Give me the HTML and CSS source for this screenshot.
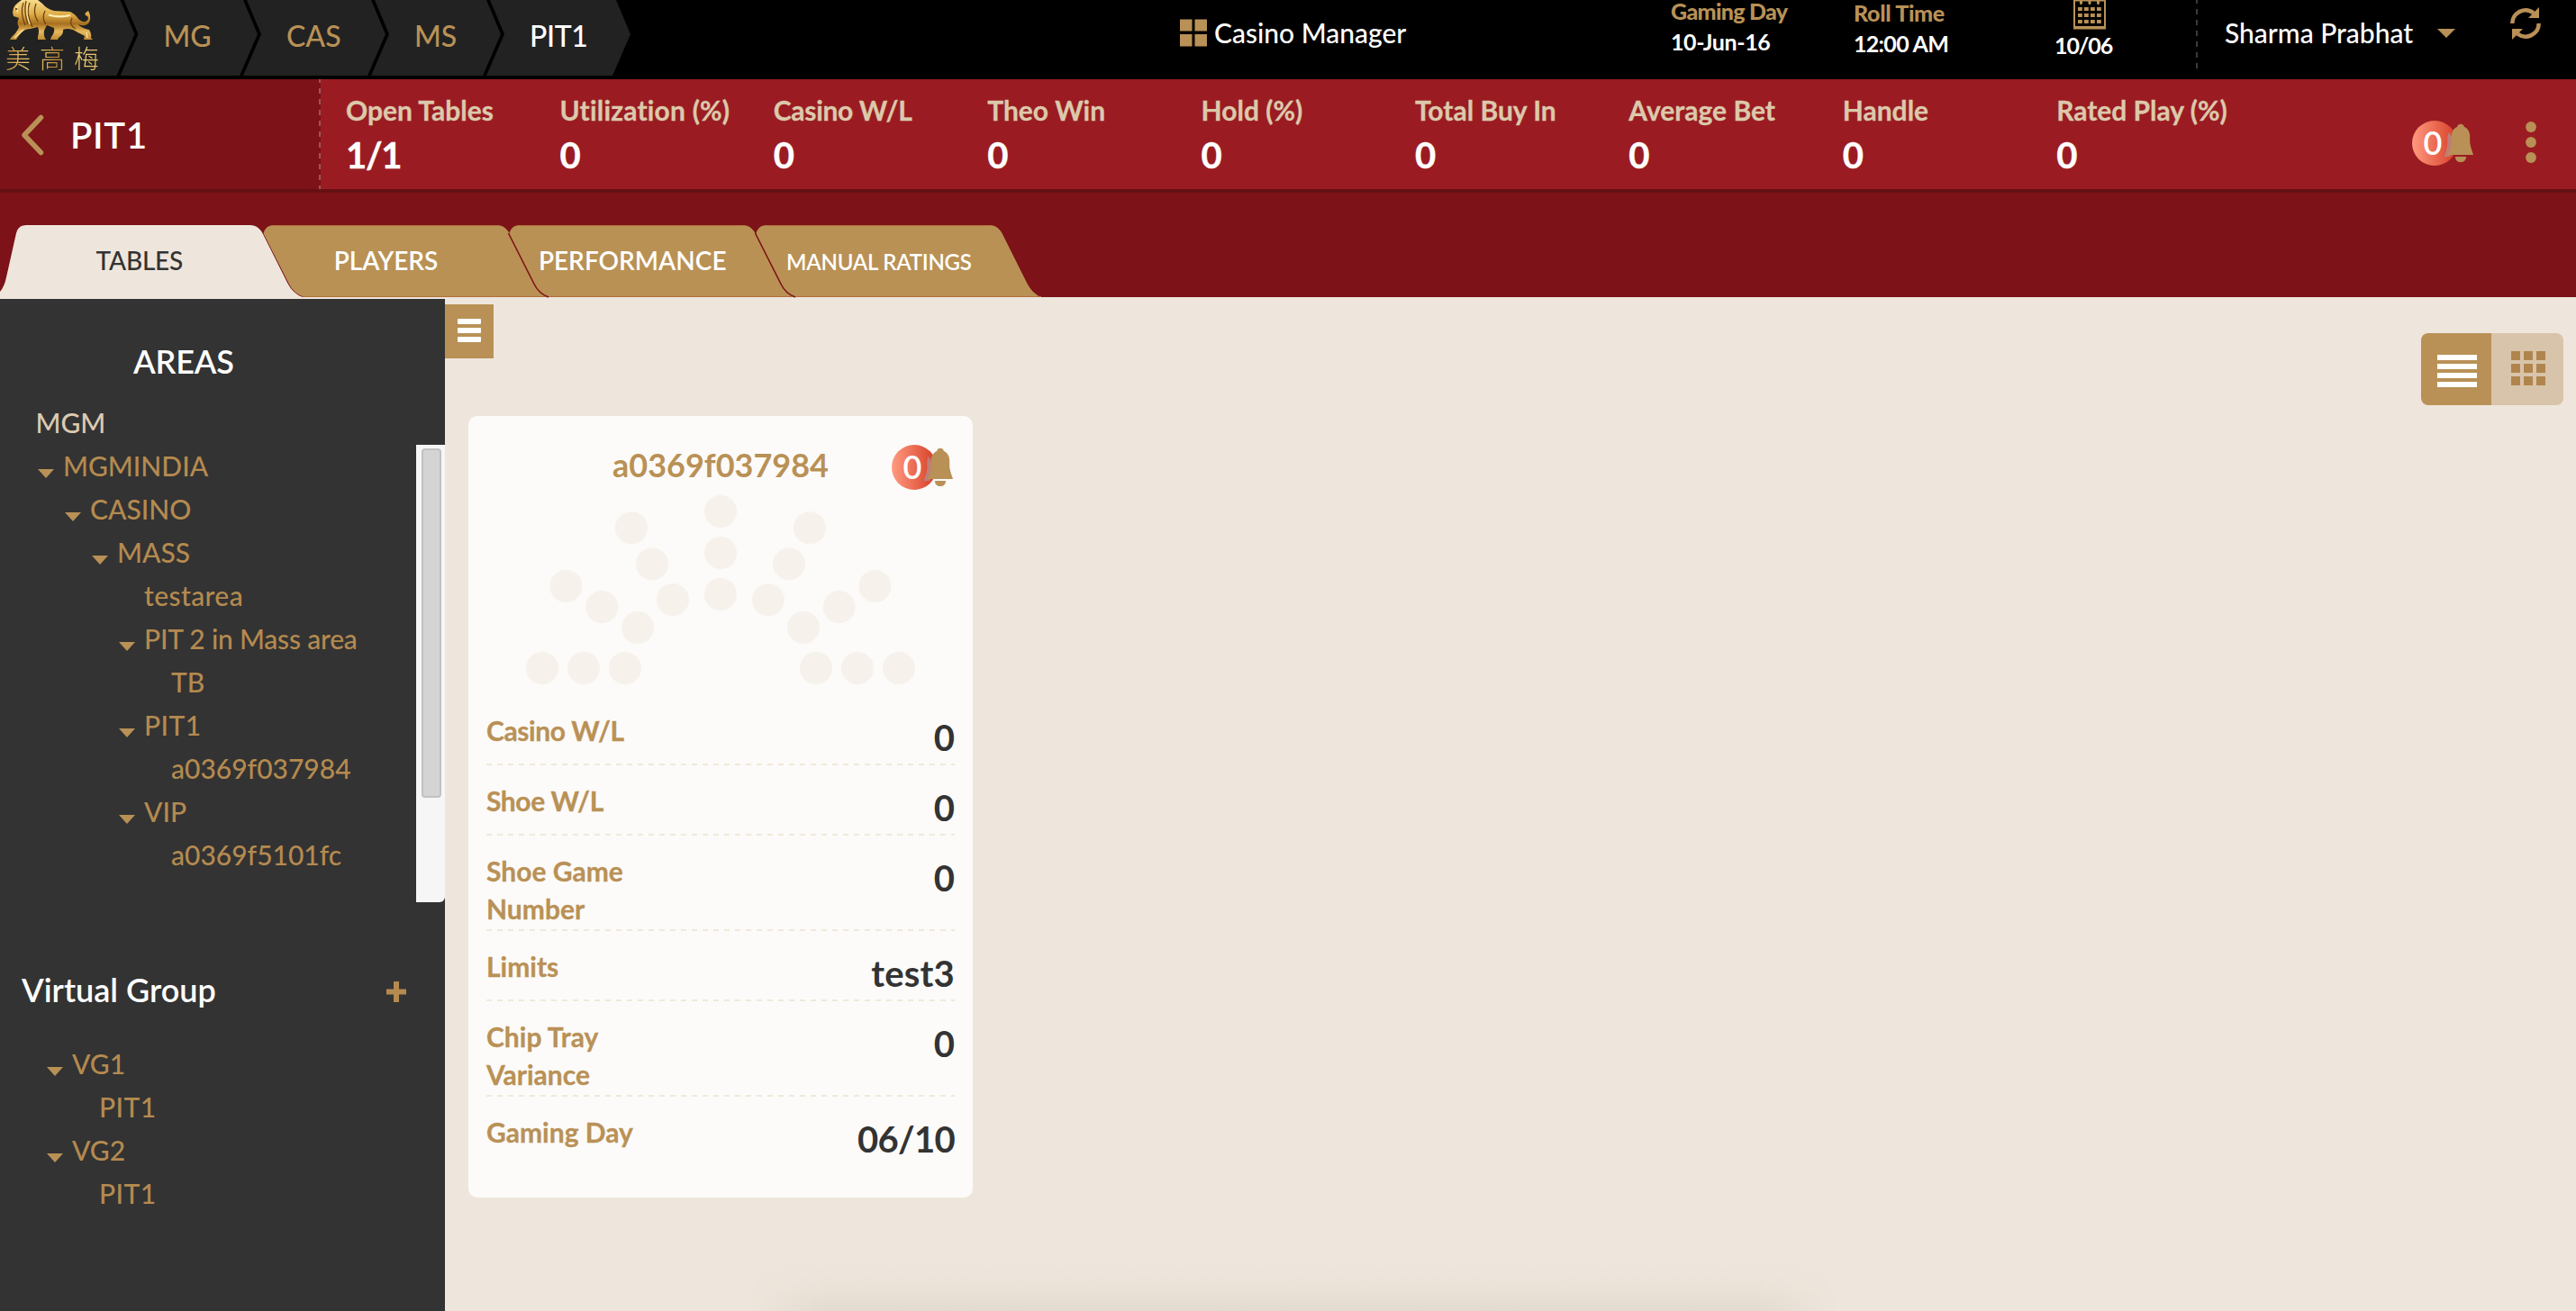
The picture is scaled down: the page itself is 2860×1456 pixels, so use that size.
FILE: index.html
```html
<!DOCTYPE html>
<html lang="en">
<head>
<meta charset="utf-8">
<title>Casino Manager</title>
<link rel="stylesheet" href="styles.css">
</head>
<body>
<svg class="defs" width="0" height="0" aria-hidden="true">
  <defs>
    <linearGradient id="alert" x1="0" x2="1" y1="0" y2="0">
      <stop offset="0" stop-color="#ff9a80"/><stop offset="1" stop-color="#d63d26"/>
    </linearGradient>
    <linearGradient id="gold" x1="0" x2="0" y1="0" y2="1">
      <stop offset="0" stop-color="#f6dc8c"/><stop offset=".35" stop-color="#e0ae4a"/><stop offset=".6" stop-color="#a8701f"/><stop offset=".8" stop-color="#e6b95c"/><stop offset="1" stop-color="#c08a34"/>
    </linearGradient>
    <clipPath id="badge-clip"><circle cx="25" cy="25" r="25"/></clipPath>
    <path id="bell" d="M50.300 6.800C50.300 2.700 57.700 2.700 57.700 6.800C61.500 8.400 64 12 64.200 17V24C64.600 29 66.500 33 68 38H40C42 33 43.500 29 43.800 24V17C44 12 46.500 8.400 50.300 6.800Z"/>
    <symbol id="badge" viewBox="0 0 70 50">
      <circle cx="25" cy="25" r="25" fill="url(#alert)"/>
      <use href="#bell" x="-4.500" y="2" fill="#bd7f76" clip-path="url(#badge-clip)"/>
      <text x="23" y="38" text-anchor="middle" class="badge-count">0</text>
      <use href="#bell" fill="#b99156"/>
      <path d="M48 40H60C60 44 57.500 46 54 46S48 44 48 40Z" fill="#b99156"/>
    </symbol>
    <symbol id="tab-on" viewBox="0 0 345 82">
      <path d="M0 82V74Q5 68 7 58L18 9Q20 0 29 0H278Q287 0 292 10L319 64Q325 76 336 80V82Z" fill="#eee6dc"/>
    </symbol>
    <symbol id="tab-off" viewBox="0 0 345 82">
      <path d="M17.500 16Q18 0 30 0H278Q287 0 292 10L319 64Q325 76 335 80H61Q51 76 45.500 64L19 11Z" fill="#b99154"/>
      <path d="M30 .5H278M61 79.500H335" stroke="#b2703c" fill="none"/>
      <path d="M17.500 9L45.800 65Q51 76 62 80" stroke="#7d1218" stroke-width="1.600" fill="none"/>
    </symbol>
  </defs>
</svg>

<header class="topbar">
  <ol class="crumbs">
    <li class="crumb crumb-logo">
      <svg width="104" height="48" viewBox="0 0 104 48">
        <path fill="url(#gold)" d="M15 9Q17 5 20 3L24 0H42L47 4Q52 10 60 12L78 13Q84 16 87 21Q93 27 97.500 22Q99 18 95 17Q93 15 98 12L99 14L100 17Q101 25 96 27.500Q91 29 87 27Q90 31 99 33Q102 38 101 42L103 44H93L94 40Q86 36 81 33Q74 31 70 33Q71 38 65 42L64 44H56L57 41Q61 36 60 31L52 28L49 34Q48 40 51 44H42V41Q44 34 42 30L34 32Q28 32 24 36Q20 40 18 44H11L13 41Q19 36 21 30Q18 26 21 20L15 18L14 14Z"/>
        <path d="M26 3Q22 14 28 28M33 3Q28 14 36 30M40 4Q36 14 42 24M29 1Q26 12 31 27M50 12Q46 20 51 27M80 20Q76 28 84 32" stroke="#6d430f" stroke-width="1.300" fill="none"/>
        <path d="M54 16.500Q66 20 78 17" stroke="#fff0b8" stroke-width="2.200" fill="none"/>
        <path d="M31 4Q28 14 33 27M20 6Q17 10 20 14M26 33L16 42M96 36L97 42" stroke="#fbe6a0" stroke-width="1.300" fill="none"/>
        <circle cx="18" cy="10" r="1" fill="#3b2206"/>
      </svg>
      <div class="logo-name">美高梅</div>
    </li>
    <li class="crumb crumb-mg">MG</li>
    <li class="crumb crumb-cas">CAS</li>
    <li class="crumb crumb-ms">MS</li>
    <li class="crumb crumb-pit">PIT1</li>
  </ol>
  <div class="app">
    <svg width="30" height="31" viewBox="0 0 30 31" fill="#b99156"><path d="M0 .5H13.500V13.500H0ZM16.500 .5H30V13.500H16.500ZM0 17H13.500V30.500H0ZM16.500 17H30V30.500H16.500Z"/></svg>
    <span>Casino Manager</span>
  </div>
  <div class="clock clock-day"><b>Gaming Day</b><span>10-Jun-16</span></div>
  <div class="clock clock-roll"><b>Roll Time</b><span>12:00 AM</span></div>
  <div class="calendar">
    <svg width="36" height="33" viewBox="0 0 36 33">
      <path d="M1 0V31.500H35V0M0 .5H36" stroke="#b99156" stroke-width="2" fill="none"/>
      <path d="M0 29H36V32H0ZM7 0H10V4L8.500 5.500L7 4ZM16.500 0H19.500V4L18 5.500L16.500 4ZM26 0H29V4L27.500 5.500L26 4Z" fill="#b99156"/>
      <path d="M5 10H31M5 17H31M5 24H31" stroke="#b99156" stroke-width="4.200" stroke-dasharray="4.800 2.200"/>
    </svg>
    <span>10/06</span>
  </div>
  <div class="divider"></div>
  <div class="user">Sharma Prabhat</div>
  <svg class="user-caret" width="20" height="10" viewBox="0 0 20 10"><path d="M0 0H20L10 10Z" fill="#b99156"/></svg>
  <svg class="refresh" width="34" height="36" viewBox="0 0 34 36" fill="none" stroke="#b99156" stroke-width="4.500">
    <path d="M2.300 18A14.700 14.700 0 0 1 26 6.500"/><path d="M31.700 18A14.700 14.700 0 0 1 8 29.500"/>
    <path d="M32 0V12H20Z M2 36V24H14Z" fill="#b99156" stroke="none"/>
  </svg>
</header>

<section class="summary">
  <div class="pit">
    <svg width="26" height="46" viewBox="0 0 26 46"><path d="M22.500 3.500L4 23L22.500 42.500" fill="none" stroke="#b99156" stroke-width="5.500" stroke-linecap="round" stroke-linejoin="round"/></svg>
    <h1>PIT1</h1>
  </div>
  <dl class="stats">
    <div><dt>Open Tables</dt><dd class="ratio">1/1</dd></div>
    <div><dt class="wide">Utilization (%)</dt><dd>0</dd></div>
    <div><dt class="tight">Casino W/L</dt><dd>0</dd></div>
    <div><dt>Theo Win</dt><dd>0</dd></div>
    <div><dt>Hold (%)</dt><dd>0</dd></div>
    <div><dt>Total Buy In</dt><dd>0</dd></div>
    <div><dt>Average Bet</dt><dd>0</dd></div>
    <div><dt>Handle</dt><dd>0</dd></div>
    <div><dt>Rated Play (%)</dt><dd>0</dd></div>
  </dl>
  <svg class="summary-badge" width="70" height="50"><use href="#badge"/></svg>
  <svg class="kebab" width="12" height="48" viewBox="0 0 12 48" fill="#b99156"><circle cx="6" cy="7" r="5.900"/><circle cx="6" cy="24" r="5.900"/><circle cx="6" cy="41" r="5.900"/></svg>
</section>

<nav class="tabs">
  <a class="tab tab-active"><svg width="345" height="82"><use href="#tab-on"/></svg><span>TABLES</span></a>
  <a class="tab"><svg width="345" height="82"><use href="#tab-off"/></svg><span>PLAYERS</span></a>
  <a class="tab"><svg width="345" height="82"><use href="#tab-off"/></svg><span>PERFORMANCE</span></a>
  <a class="tab tab-small"><svg width="345" height="82"><use href="#tab-off"/></svg><span>MANUAL RATINGS</span></a>
</nav>

<div class="body">
  <aside class="sidebar">
    <h2 class="areas-title">AREAS</h2>
    <div class="areas">
      <ul class="tree">
        <li class="root">MGM</li>
        <li class="l1 open">MGMINDIA</li>
        <li class="l2 open">CASINO</li>
        <li class="l3 open">MASS</li>
        <li class="l4 loose">testarea</li>
        <li class="l4 open tight">PIT 2 in Mass area</li>
        <li class="l5">TB</li>
        <li class="l4 open loose">PIT1</li>
        <li class="l5">a0369f037984</li>
        <li class="l4 open">VIP</li>
        <li class="l5">a0369f5101fc</li>
      </ul>
      <div class="scrollbar"><div class="thumb"></div></div>
    </div>
    <div class="group-head">
      <h2>Virtual Group</h2>
      <svg width="22" height="23" viewBox="0 0 22 23"><path d="M11 0V23M0 11.500H22" stroke="#b48a50" stroke-width="6"/></svg>
    </div>
    <ul class="tree groups">
      <li class="l1 open">VG1</li>
      <li class="l2 loose">PIT1</li>
      <li class="l1 open">VG2</li>
      <li class="l2 loose">PIT1</li>
    </ul>
  </aside>

  <main class="main">
    <div class="tools">
      <button class="menu" aria-label="Menu"><i></i><i></i><i></i></button>
      <div class="toggle">
        <span class="toggle-list"><svg width="44" height="36" viewBox="0 0 44 36" fill="#fff"><path d="M0 0H44V6H0ZM0 10H44V16H0ZM0 20H44V26H0ZM0 30H44V36H0Z"/></svg></span>
        <span class="toggle-grid"><svg width="38" height="38" viewBox="0 0 38 38"><path d="M0 5H38M0 19H38M0 33H38" stroke="#b0854d" stroke-width="10" stroke-dasharray="10 4"/></svg></span>
      </div>
    </div>

    <article class="card">
      <h3>a0369f037984</h3>
      <svg class="card-badge" width="70" height="50"><use href="#badge"/></svg>
      <svg class="seats" width="560" height="234" viewBox="520 538 560 234" fill="#f6f1eb">
        <circle cx="800" cy="568" r="18"/><circle cx="800" cy="614" r="18"/><circle cx="800" cy="660" r="18"/>
        <circle cx="701" cy="586.300" r="18"/><circle cx="724" cy="626.300" r="18"/><circle cx="747" cy="666" r="18"/>
        <circle cx="899" cy="586.300" r="18"/><circle cx="876" cy="626.300" r="18"/><circle cx="853" cy="666" r="18"/>
        <circle cx="628.500" cy="651" r="18"/><circle cx="668.300" cy="674" r="18"/><circle cx="708" cy="697" r="18"/>
        <circle cx="971.500" cy="651" r="18"/><circle cx="931.700" cy="674" r="18"/><circle cx="892" cy="697" r="18"/>
        <circle cx="602" cy="742" r="18"/><circle cx="648" cy="742" r="18"/><circle cx="694" cy="742" r="18"/>
        <circle cx="906" cy="742" r="18"/><circle cx="952" cy="742" r="18"/><circle cx="998" cy="742" r="18"/>
      </svg>
      <dl class="facts">
        <div><dt class="tight">Casino W/L</dt><dd>0</dd></div>
        <div><dt class="tight">Shoe W/L</dt><dd>0</dd></div>
        <div><dt>Shoe Game Number</dt><dd>0</dd></div>
        <div><dt>Limits</dt><dd class="word">test3</dd></div>
        <div><dt>Chip Tray Variance</dt><dd>0</dd></div>
        <div><dt>Gaming Day</dt><dd class="date">06/10</dd></div>
      </dl>
    </article>
  </main>
</div>
<div class="bottom-shade"></div>
</body>
</html>
```
FILE: styles.css
```css
* { box-sizing: border-box; margin: 0; padding: 0; }

body {
  position: relative;
  width: 2860px;
  height: 1456px;
  overflow: hidden;
  background: #eee6dc;
  font-family: Lato, "Noto Sans CJK TC", sans-serif;
  font-weight: 500;
  color: #333;
}

ul, ol { list-style: none; }
svg { display: block; flex: none; }
.defs { position: absolute; }

/* Top bar */
.topbar { display: flex; align-items: flex-start; height: 88px; background: #000; color: #fff; }
.crumbs { display: flex; width: 700px; flex: none; }
.crumb {
  flex: none;
  height: 84px;
  margin-left: -16px;
  padding-left: 48px;
  background: #222;
  color: #b99156;
  font-size: 32px;
  line-height: 79px;
  clip-path: polygon(4px 0, calc(100% - 16px) 0, 100% 38px, calc(100% - 20px) 84px, 0 84px, 20px 38px);
}
.crumb-logo {
  width: 149.5px;
  margin-left: 0;
  padding-left: 0;
  clip-path: polygon(0 0, calc(100% - 16px) 0, 100% 38px, calc(100% - 20px) 84px, 0 84px);
}
.logo-name {
  width: 130px;
  margin-left: 6px;
  font-family: "Noto Sans CJK TC", sans-serif;
  font-size: 28px;
  font-weight: 300;
  letter-spacing: 10px;
  line-height: 32px;
  background: linear-gradient(100deg, #c8923a, #f6d67c 25%, #c08a34 45%, #f6d67c 65%, #c8923a);
  -webkit-background-clip: text;
  background-clip: text;
  color: transparent;
}
.crumb-mg { width: 152.5px; }
.crumb-cas { width: 158px; }
.crumb-ms { width: 144px; }
.crumb-pit { width: 160px; color: #fff; letter-spacing: -.4px; }

.app { display: flex; width: 545px; margin-left: 610px; flex: none; font-size: 30px; line-height: 73px; }
.app svg { margin: 20.5px 8px 0 0; }
.clock { flex: none; font-size: 25px; font-weight: 700; line-height: 34px; letter-spacing: -.4px; }
.clock b, .clock span { display: block; }
.clock b { color: #b99156; }
.clock-day { width: 203px; margin-top: -5px; }
.clock-day b { letter-spacing: -.7px; }
.clock-roll { width: 223px; margin-top: -3px; }
.clock-roll b { letter-spacing: -.3px; }
.clock-roll span { letter-spacing: -.7px; }
.calendar { flex: none; width: 157px; font-size: 25px; font-weight: 700; line-height: 34px; letter-spacing: -1.1px; }
.calendar svg { margin-left: 21px; }
.divider { flex: none; width: 2px; height: 76px; background: repeating-linear-gradient(#3c3c3c 0 4px, transparent 4px 10px, #3c3c3c 10px 12px); }
.user { flex: none; width: 236px; margin-left: 30px; font-size: 30px; line-height: 73px; }
.user-caret { margin-top: 32px; }
.refresh { margin: 8px 0 0 61px; }

/* Pit summary */
.summary { display: flex; align-items: flex-start; height: 126px; border-bottom: 4px solid #651013; background: #9a1c22; color: #fff; }
.pit { display: flex; flex: none; width: 356px; height: 122px; padding-left: 23px; background: repeating-linear-gradient(#9d5358 0 4px, #7d1218 4px 10px, #9d5358 10px 12px) right / 2px 100% no-repeat #7d1218; }
.pit svg { margin-top: 39px; }
.pit h1 { margin-left: 29px; font-size: 40px; font-weight: 600; letter-spacing: .7px; line-height: 124px; }
.stats { display: grid; grid-template-columns: repeat(9, 237.4px); flex: none; width: 2322px; padding: 14px 0 0 28px; }
.stats dt { color: #dcc9ac; font-size: 30px; font-weight: 700; line-height: 40px; white-space: nowrap; -webkit-text-stroke: .3px; }
.stats .wide { letter-spacing: .2px; }
.stats .tight { letter-spacing: -.3px; }
.stats dd { font-size: 40px; font-weight: 700; line-height: 61px; -webkit-text-stroke: .4px; }
.stats .ratio { letter-spacing: -1.3px; }
.summary-badge { margin-top: 46px; }
.kebab { margin: 46px 0 0 56px; }
.badge-count { font-size: 36px; font-weight: 600; fill: #fff; }

/* Tabs */
.tabs { display: flex; height: 116px; padding: 36px 0 0 18px; background: #7d1218; }
.tab { position: relative; flex: none; width: 273.700px; color: #fff; font-size: 28px; font-weight: 600; line-height: 78px; text-align: center; }
.tab svg { position: absolute; top: 0; left: -18px; }
.tab span { position: relative; }
.tab-active { z-index: 1; color: #333; font-weight: 500; letter-spacing: -.2px; }
.tab-small { font-size: 24px; line-height: 81px; letter-spacing: -.25px; }

/* Sidebar */
.body { display: flex; height: 1126px; }
.sidebar { flex: none; width: 494px; margin-top: 2px; padding-top: 47px; background: #333; }
.sidebar h2 { color: #fff; font-size: 36px; font-weight: 600; line-height: 44px; }
.areas-title { padding-left: 148px; letter-spacing: -.2px; }
.areas { display: flex; justify-content: space-between; height: 556px; margin-top: 23px; }
.tree { margin-top: -1px; color: #b48a50; font-size: 30px; line-height: 48px; }
.tree li { white-space: nowrap; }
.tree .loose { letter-spacing: .4px; }
.tree .tight { letter-spacing: -.2px; }
.root { padding-left: 39.5px; color: #dccab2; }
.l1 { padding-left: 70px; }
.l2 { padding-left: 100px; }
.l3 { padding-left: 130px; }
.l4 { padding-left: 160px; }
.l5 { padding-left: 190px; }
.open::before {
  content: "";
  display: inline-block;
  width: 18px;
  height: 10px;
  margin: 0 10px 0 -28px;
  background: #b99156;
  clip-path: polygon(0 0, 100% 0, 50% 100%);
  vertical-align: -2px;
}
.scrollbar { width: 32px; height: 508px; margin-top: 48px; padding: 4px 4px 0 6px; border-radius: 0 0 6px 0; background: #f6f6f6; }
.thumb { height: 388px; border: 2px solid #c1c1c1; border-radius: 4px; background: #d4d4d4; }
.group-head { display: flex; justify-content: space-between; margin-top: 75px; padding: 0 43px 0 24px; }
.group-head svg { margin-top: 13px; }
.groups { margin-top: 36px; padding-left: 10px; }

/* Main area */
.main { flex: 1; }
.tools { display: flex; justify-content: space-between; align-items: flex-start; height: 132px; padding: 8px 14px 0 0; }
.menu { display: flex; flex-direction: column; gap: 4px; width: 54px; height: 60px; padding: 16px 14px; border: 0; background: #b99156; }
.menu i { width: 26px; height: 6px; border-radius: 1px; background: #fff; }
.toggle { display: flex; height: 80px; margin-top: 32px; border-radius: 8px; overflow: hidden; }
.toggle-list { width: 78px; padding: 24px 0 0 18px; background: #b99156; }
.toggle-grid { width: 80px; padding: 20px 0 0 22px; background: #d8c4aa; }

/* Table card */
.card { position: relative; width: 560px; height: 868px; margin-left: 26px; padding-top: 32px; border-radius: 10px; background: #fcfbf9; }
.card h3 { color: #b99156; font-size: 36px; font-weight: 700; line-height: 44px; text-align: center; }
.card-badge { position: absolute; top: 32px; left: 470px; }
.facts { padding: 0 20px; }
.facts div { display: flex; justify-content: space-between; padding-top: 18px; min-height: 78px; background: repeating-linear-gradient(90deg, #f0e9da 0 6px, transparent 6px 12px) bottom / 100% 2px no-repeat; }
.facts div:last-child { background: none; }
.facts dt { width: 190px; padding-bottom: 4px; color: #b99156; font-size: 30px; font-weight: 700; line-height: 42px; -webkit-text-stroke: .3px; }
.facts .tight { letter-spacing: -.4px; }
.facts dd { padding-top: 1px; color: #333; font-size: 40px; font-weight: 700; line-height: 56px; }
.facts .date { letter-spacing: -.7px; }
.facts .word { letter-spacing: .2px; }

/* Soft shade along the bottom edge */
.bottom-shade {
  position: absolute;
  left: 830px;
  bottom: 0;
  width: 1210px;
  height: 50px;
  background: linear-gradient(rgba(90, 70, 50, 0), rgba(90, 70, 50, .025) 50%, rgba(90, 70, 50, .07));
  -webkit-mask-image: linear-gradient(90deg, transparent, #000 90px, #000 calc(100% - 90px), transparent);
  mask-image: linear-gradient(90deg, transparent, #000 90px, #000 calc(100% - 90px), transparent);
}
```
